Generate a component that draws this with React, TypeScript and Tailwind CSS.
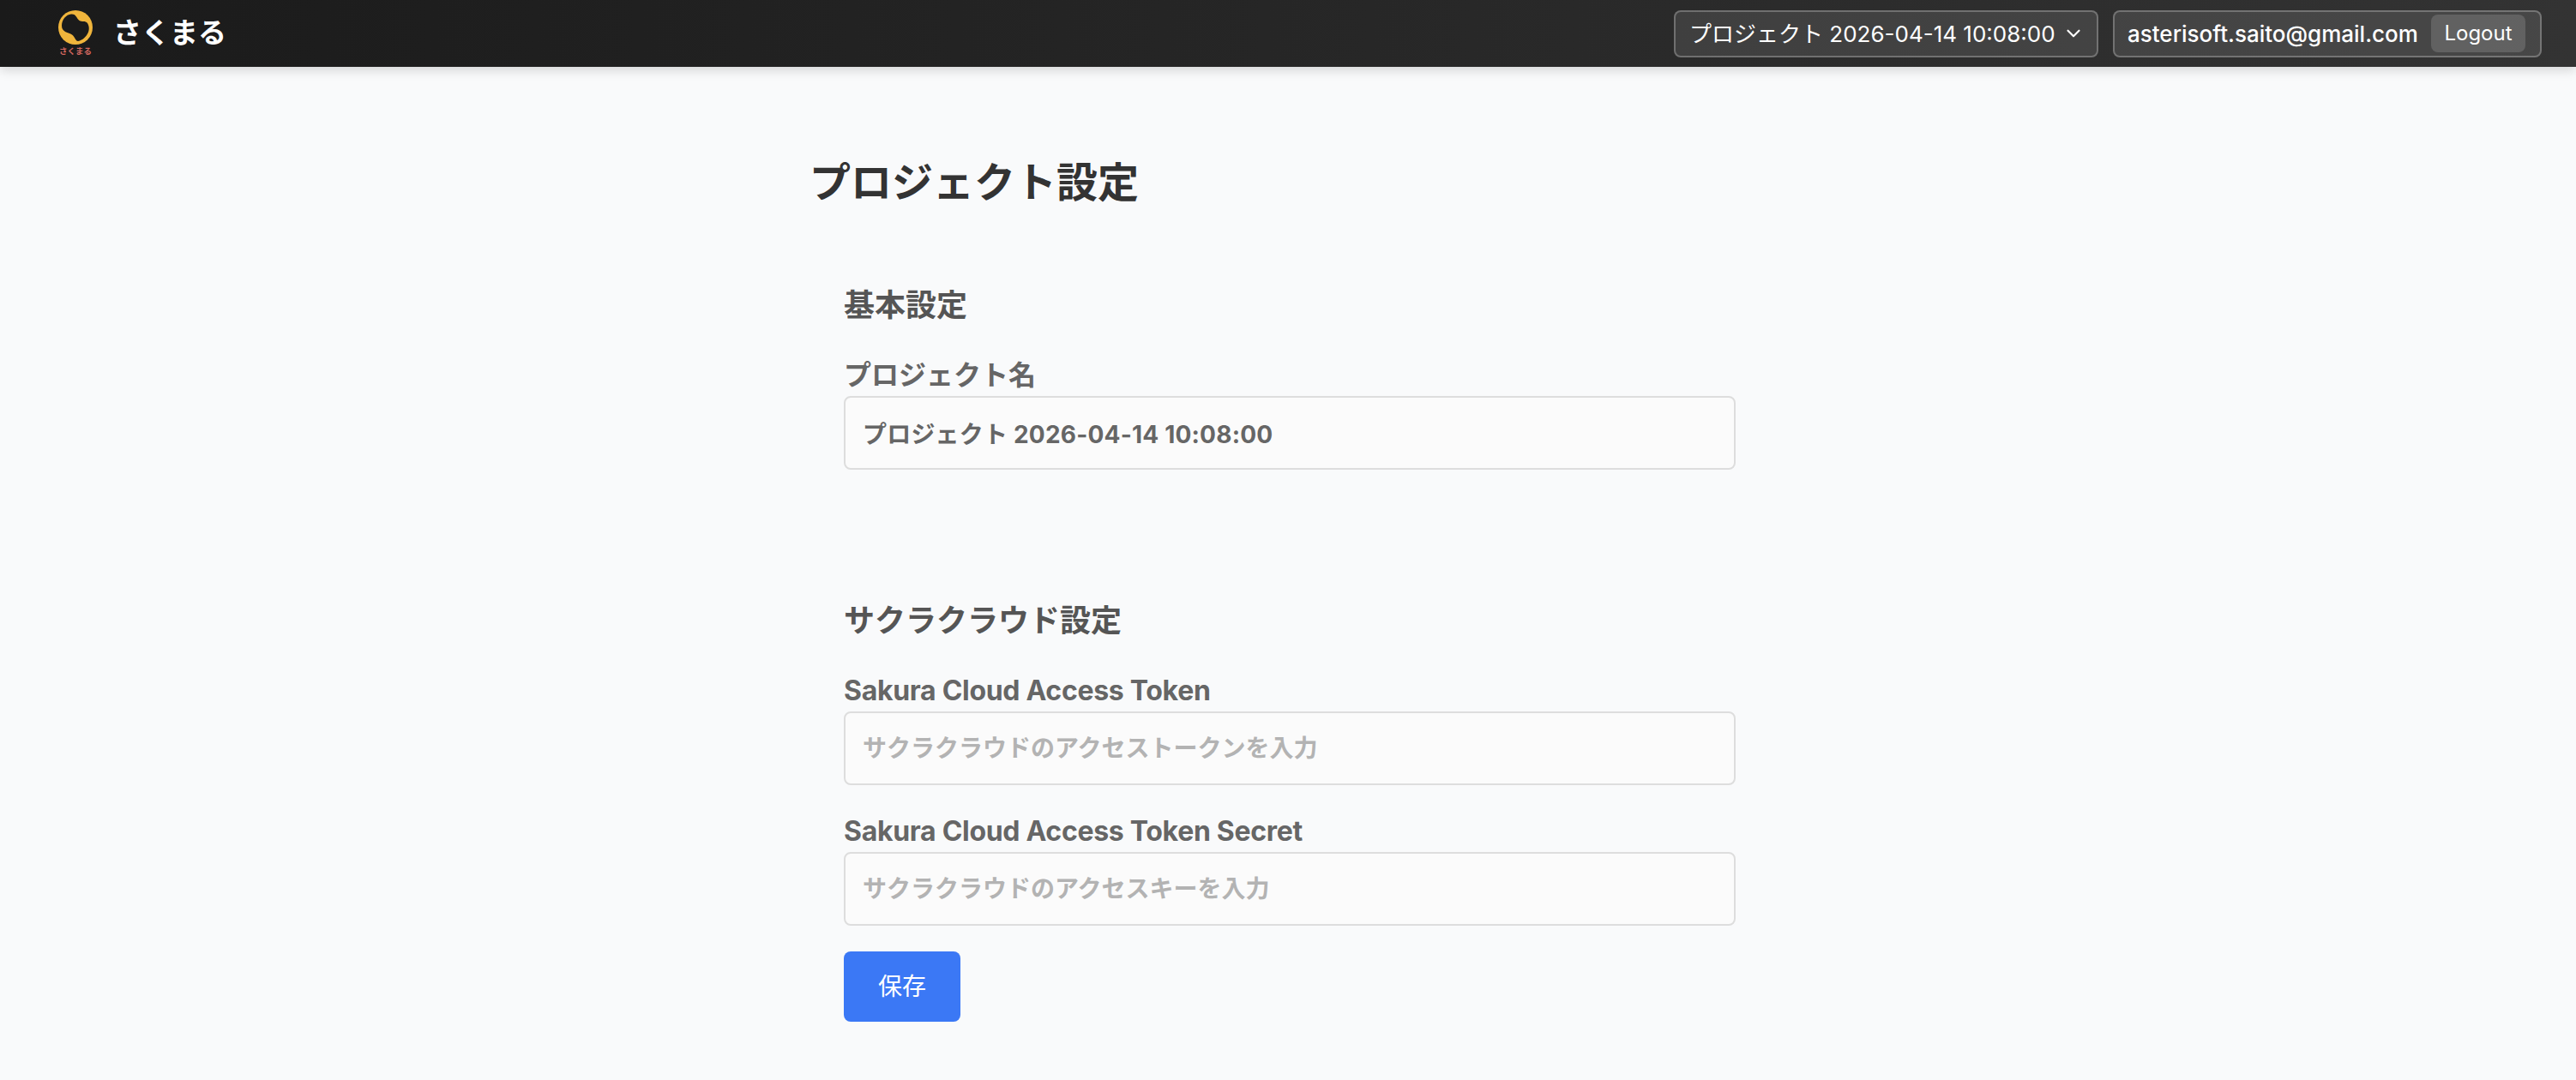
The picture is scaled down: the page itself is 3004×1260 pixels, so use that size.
import React from "react";
import { ChevronDownIcon } from "lucide-react";

const FONT = "font-['Inter','Noto_Sans_CJK_JP',sans-serif]";

const Logo = () => (
  <div className="flex flex-col items-center w-10 flex-shrink-0">
    <svg width="40" height="40" viewBox="0 0 40 40">
      <circle cx="20" cy="20" r="20" fill="#f0b53c" />
      <path
        d="M4 18C4 11 9 5 15 4.500C20 4 21 8 23.500 11C26 14 30 12 33 14C36.500 17 36.500 24 34 27.500C31 33 26 35.500 23 36C20 36 19.500 31 16 28.500C12 25.500 4 26 4 18Z"
        fill="#1b1b1b"
      />
    </svg>
    <span className="text-[9.5px] leading-[12px] mt-[2px] font-bold text-[#d4675f] whitespace-nowrap">さくまる</span>
  </div>
);

const Field = ({ label, value, placeholder, latin }: { label: string; value?: string; placeholder?: string; latin?: boolean }) => (
  <div className="flex flex-col">
    <label className={`text-[32px] leading-[40px] font-bold text-[#666666] ${latin ? "tracking-[-0.3px]" : ""}`}>{label}</label>
    <input
      readOnly
      value={value}
      placeholder={placeholder}
      className={`w-full h-[86px] mt-[4px] px-[20px] bg-[#fbfbfb] border-2 border-[#dddddd] rounded-[8px] text-[28px] font-bold text-[#666666] placeholder:text-[#b3b3b3] outline-none ${value ? "tracking-[0.2px]" : ""} ${FONT}`}
    />
  </div>
);

export default function App() {
  return (
    <div className={`min-h-[1260px] bg-[#f9fafb] ${FONT}`}>
      <header className="h-[78px] flex items-center justify-between pl-[68px] pr-[40px] bg-gradient-to-r from-[#1a1a1a] to-[#333333] shadow-[0_4px_12px_rgba(0,0,0,0.15)]">
        <div className="flex items-center gap-[24px]">
          <Logo />
          <span className="text-[33px] font-bold text-white">さくまる</span>
        </div>
        <div className="flex items-center gap-[17px] text-white">
          <button className="h-[55px] w-[495px] flex items-center justify-between pl-[16px] pr-[14px] bg-white/10 border-2 border-white/25 rounded-[8px] text-[26px]">
            <span className="whitespace-nowrap">プロジェクト 2026-04-14 10:08:00</span>
            <ChevronDownIcon className="w-[26px] h-[26px] flex-shrink-0" />
          </button>
          <div className="h-[55px] w-[500px] flex items-center justify-between pl-[15px] pr-[17px] bg-white/10 border-2 border-white/25 rounded-[8px] text-[26px] font-medium">
            <span className="whitespace-nowrap">asterisoft.saito@gmail.com</span>
            <button className="h-[44px] w-[110px] rounded-[8px] bg-white/15 text-[24px] font-normal">Logout</button>
          </div>
        </div>
      </header>

      <main className="w-[1116px] mx-auto pt-[105px]">
        <h1 className="text-[48px] leading-[60px] font-bold text-[#333333]">プロジェクト設定</h1>
        <div className="w-[1080px] pl-[40px] mt-[89px]">
          <section>
            <h2 className="text-[36px] leading-[48px] font-bold text-[#555555]">基本設定</h2>
            <div className="mt-[38px]">
              <Field label="プロジェクト名" value="プロジェクト 2026-04-14 10:08:00" />
            </div>
          </section>
          <section className="mt-[152px]">
            <h2 className="text-[36px] leading-[48px] font-bold text-[#555555]">サクラクラウド設定</h2>
            <div className="mt-[38px] flex flex-col gap-[34px]">
              <Field latin label="Sakura Cloud Access Token" placeholder="サクラクラウドのアクセストークンを入力" />
              <Field latin label="Sakura Cloud Access Token Secret" placeholder="サクラクラウドのアクセスキーを入力" />
            </div>
            <button className="mt-[30px] w-[136px] h-[82px] rounded-[8px] bg-[#3b78f5] text-white text-[28px]">保存</button>
          </section>
        </div>
      </main>
    </div>
  );
}
